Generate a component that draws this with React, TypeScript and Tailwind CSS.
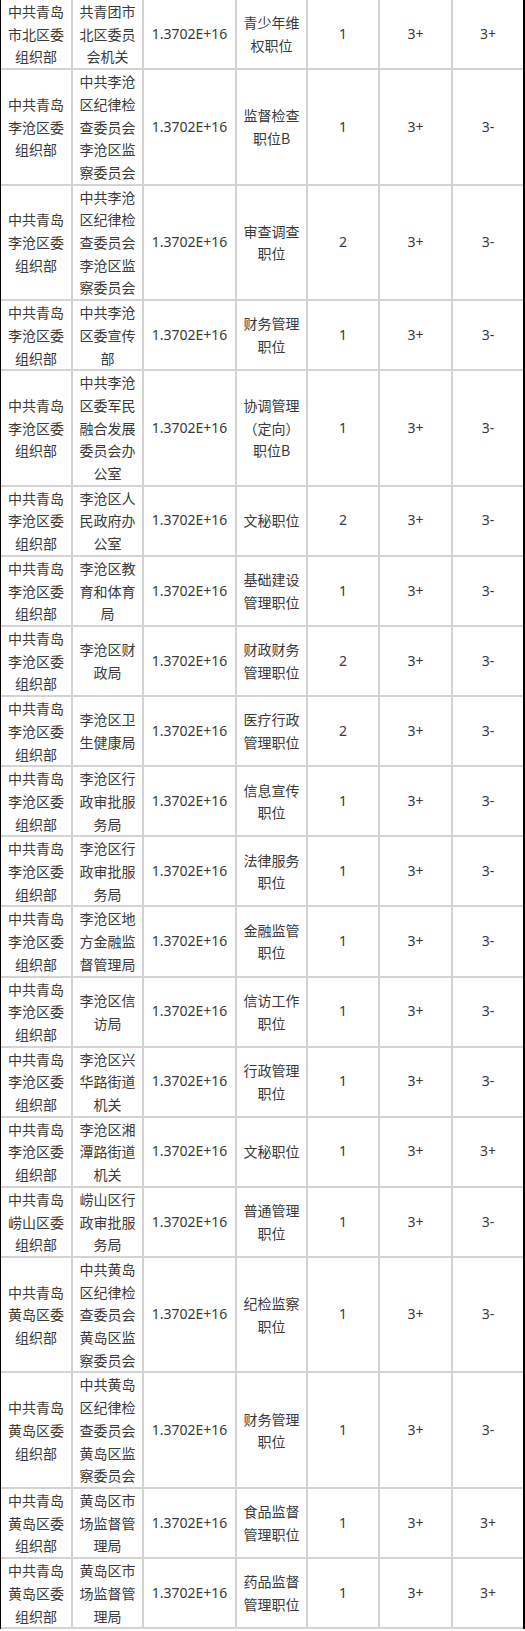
type Row = {
  dept: string;
  unit: string;
  job: string;
  count: string;
  a: string;
  b: string;
};

const LC = "中共青岛李沧区委组织部";
const LC_JW = "中共李沧区纪律检查委员会李沧区监察委员会";
const HD = "中共青岛黄岛区委组织部";
const HD_JW = "中共黄岛区纪律检查委员会黄岛区监察委员会";

const rows: Row[] = [
  { dept: "中共青岛市北区委组织部", unit: "共青团市北区委员会机关", job: "青少年维权职位", count: "1", a: "3+", b: "3+" },
  { dept: LC, unit: LC_JW, job: "监督检查职位B", count: "1", a: "3+", b: "3-" },
  { dept: LC, unit: LC_JW, job: "审查调查职位", count: "2", a: "3+", b: "3-" },
  { dept: LC, unit: "中共李沧区委宣传部", job: "财务管理职位", count: "1", a: "3+", b: "3-" },
  { dept: LC, unit: "中共李沧区委军民融合发展委员会办公室", job: "协调管理（定向）职位B", count: "1", a: "3+", b: "3-" },
  { dept: LC, unit: "李沧区人民政府办公室", job: "文秘职位", count: "2", a: "3+", b: "3-" },
  { dept: LC, unit: "李沧区教育和体育局", job: "基础建设管理职位", count: "1", a: "3+", b: "3-" },
  { dept: LC, unit: "李沧区财政局", job: "财政财务管理职位", count: "2", a: "3+", b: "3-" },
  { dept: LC, unit: "李沧区卫生健康局", job: "医疗行政管理职位", count: "2", a: "3+", b: "3-" },
  { dept: LC, unit: "李沧区行政审批服务局", job: "信息宣传职位", count: "1", a: "3+", b: "3-" },
  { dept: LC, unit: "李沧区行政审批服务局", job: "法律服务职位", count: "1", a: "3+", b: "3-" },
  { dept: LC, unit: "李沧区地方金融监督管理局", job: "金融监管职位", count: "1", a: "3+", b: "3-" },
  { dept: LC, unit: "李沧区信访局", job: "信访工作职位", count: "1", a: "3+", b: "3-" },
  { dept: LC, unit: "李沧区兴华路街道机关", job: "行政管理职位", count: "1", a: "3+", b: "3-" },
  { dept: LC, unit: "李沧区湘潭路街道机关", job: "文秘职位", count: "1", a: "3+", b: "3+" },
  { dept: "中共青岛崂山区委组织部", unit: "崂山区行政审批服务局", job: "普通管理职位", count: "1", a: "3+", b: "3-" },
  { dept: HD, unit: HD_JW, job: "纪检监察职位", count: "1", a: "3+", b: "3-" },
  { dept: HD, unit: HD_JW, job: "财务管理职位", count: "1", a: "3+", b: "3-" },
  { dept: HD, unit: "黄岛区市场监督管理局", job: "食品监督管理职位", count: "1", a: "3+", b: "3+" },
  { dept: HD, unit: "黄岛区市场监督管理局", job: "药品监督管理职位", count: "1", a: "3+", b: "3+" },
];

const cell =
  "border-2 border-[#d3d3d3] px-[5px] py-0 text-center align-middle break-all";
// pure latin cells: a wider latin face, no mixed-font line boxes
const latin = "font-['Noto_Sans',sans-serif]";

export default function App() {
  return (
    <div
      className="w-[525px] bg-white text-[14px] leading-[22.7px] text-[#3a3a3a]"
      style={{ fontFamily: '"Noto Sans CJK SC", sans-serif' }}
    >
      <div className="border-l border-r-2 border-black">
        <table className="w-[522px] table-fixed border-collapse">
          <colgroup>
            <col className="w-[71px]" />
            <col className="w-[71px]" />
            <col className="w-[93px]" />
            <col className="w-[71px]" />
            <col className="w-[72px]" />
            <col className="w-[73px]" />
            <col className="w-[71px]" />
          </colgroup>
          <tbody>
            {rows.map((r, i) => {
              const top = i === 0 ? "border-t-0" : "";
              return (
                <tr key={i}>
                  <td className={`${cell} border-l-0 ${top}`}>{r.dept}</td>
                  <td className={`${cell} ${top}`}>{r.unit}</td>
                  <td className={`${cell} ${latin} ${top}`}>1.3702E+16</td>
                  <td className={`${cell} ${top}`}>{r.job}</td>
                  <td className={`${cell} ${latin} ${top}`}>{r.count}</td>
                  <td className={`${cell} ${latin} ${top}`}>{r.a}</td>
                  <td className={`${cell} ${latin} border-r-0 ${top}`}>{r.b}</td>
                </tr>
              );
            })}
          </tbody>
        </table>
      </div>
    </div>
  );
}
